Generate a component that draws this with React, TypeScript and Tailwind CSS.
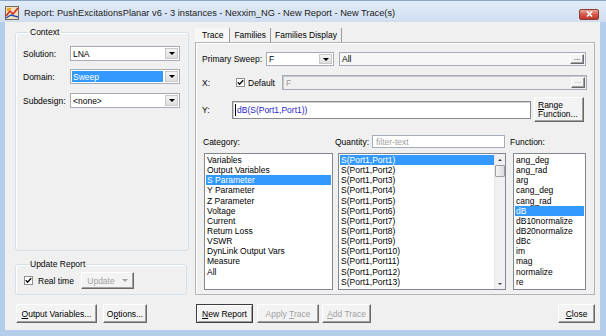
import React from "react";

const F = "font-['Liberation_Sans',Arial,sans-serif]";

function Arrow({ color = "border-t-black" }: { color?: string }) {
  return (
    <div
      className={`w-0 h-0 border-l-[3px] border-r-[3px] border-t-[3px] border-l-transparent border-r-transparent ${color}`}
    />
  );
}

function Combo({
  className,
  text,
  highlight,
}: {
  className: string;
  text: string;
  highlight?: boolean;
}) {
  return (
    <div className={`flex border border-[#a5acb5] bg-white ${className}`}>
      <div className="flex-1 flex items-center p-[1px] min-w-0">
        <div
          className={`h-full flex items-center pl-[1px] ${
            highlight ? "bg-[#3399ff] text-white w-full" : "text-black"
          }`}
        >
          {text}
        </div>
      </div>
      <div className="w-[13px] m-[1px] border border-[#c8c8c8] bg-gradient-to-b from-[#f4f4f4] to-[#dedede] flex items-center justify-center">
        <Arrow />
      </div>
    </div>
  );
}

function Check() {
  return (
    <div className="w-[9px] h-[9px] border border-[#8e8f8f] bg-white flex items-center justify-center">
      <svg width="7" height="7" viewBox="0 0 7 7">
        <path d="M0.8 3.3 L2.6 5.2 L6.2 1.2" stroke="#111" strokeWidth="1.5" fill="none" />
      </svg>
    </div>
  );
}

function Btn({
  className,
  children,
  disabled,
  def,
}: {
  className: string;
  children: React.ReactNode;
  disabled?: boolean;
  def?: boolean;
}) {
  return (
    <div
      className={`flex items-center justify-center border ${
        def
          ? "border-[#3c3c3c] shadow-[inset_1px_1px_0_#ffffff,inset_-1px_-1px_0_#a0a0a0]"
          : "border-t-white border-l-white border-r-[#696969] border-b-[#696969] shadow-[inset_-1px_-1px_0_#a0a0a0]"
      } bg-[#f3f3f3] ${disabled ? "text-[#a2a2a2]" : "text-black"} ${className}`}
    >
      {children}
    </div>
  );
}

const categories = [
  "Variables",
  "Output Variables",
  "S Parameter",
  "Y Parameter",
  "Z Parameter",
  "Voltage",
  "Current",
  "Return Loss",
  "VSWR",
  "DynLink Output Vars",
  "Measure",
  "All",
];

const quantities = Array.from({ length: 13 }, (_, i) => `S(Port1,Port${i + 1})`);

const functions = [
  "ang_deg",
  "ang_rad",
  "arg",
  "cang_deg",
  "cang_rad",
  "dB",
  "dB10normalize",
  "dB20normalize",
  "dBc",
  "im",
  "mag",
  "normalize",
  "re",
];

function Item({ text, sel, className = "" }: { text: string; sel?: boolean; className?: string }) {
  return (
    <div
      className={`h-[10.15px] leading-[10.15px] pl-[1px] whitespace-nowrap ${
        sel ? "bg-[#3399ff] text-white" : "text-black"
      } ${className}`}
    >
      {text}
    </div>
  );
}

export default function App() {
  return (
    <div
      className={`${F} w-[606px] h-[336px] bg-[#b3cdeb] flex flex-col text-[8.5px] leading-[10px] text-black overflow-hidden border-t border-[#8da6c4]`}
    >
      {/* title bar */}
      <div className="h-[21px] flex items-center bg-gradient-to-b from-[#e2ecf8] to-[#d0def0] pl-[5px] pr-[7px] relative">
        <svg width="14" height="14" viewBox="0 0 14 14" className="mt-[2px]">
          <rect x="0.5" y="0.5" width="13" height="13" fill="#f3e0c0" stroke="#7a6a5a" />
          <path d="M1 10 L5 5 L8 8 L13 2" stroke="#d03020" strokeWidth="1.6" fill="none" />
          <path d="M1 12 L6 9 L13 11" stroke="#2050c0" strokeWidth="1.4" fill="none" />
          <rect x="2" y="2" width="4" height="3" fill="#f0a020" />
        </svg>
        <div className="ml-[5px] mt-[3px] text-[9.25px] text-[#1b1b1b] whitespace-nowrap">
          Report: PushExcitationsPlanar v6 - 3 instances - Nexxim_NG - New Report - New Trace(s)
        </div>
        <div className="ml-auto mt-[5px] w-[20px] h-[11px] rounded-[2px] border border-[#8e3a32] bg-gradient-to-b from-[#e9a99a] via-[#d2574a] to-[#c0392b] flex items-center justify-center">
          <svg width="7" height="6" viewBox="0 0 7 6">
            <path d="M1 0.5 L6 5.5 M6 0.5 L1 5.5" stroke="white" strokeWidth="1.6" />
          </svg>
        </div>
      </div>

      {/* body */}
      <div className="flex-1 ml-[5px] mr-[6px] mb-[6px] bg-[#f0f0f0] flex flex-col">
        <div className="flex pt-[5px]">
          {/* left column */}
          <div className="ml-[10px] w-[174px] flex flex-col">
            <fieldset className="h-[224px] border border-[#d5dfe5] rounded-[3px] shadow-[inset_1px_1px_0_#ffffff] pl-[7px]">
              <legend className="ml-[5px] px-[2px] leading-[10px]">Context</legend>
              <div className="pt-[9px] flex flex-col">
                <div className="flex items-center h-[15px]">
                  <div className="w-[47px]">Solution:</div>
                  <Combo className="w-[110px] h-[15px]" text="LNA" />
                </div>
                <div className="flex items-center h-[15px] mt-[8px]">
                  <div className="w-[47px]">Domain:</div>
                  <Combo className="w-[110px] h-[15px]" text="Sweep" highlight />
                </div>
                <div className="flex items-center h-[15px] mt-[9px]">
                  <div className="w-[47px]">Subdesign:</div>
                  <Combo className="w-[110px] h-[15px]" text="<none>" />
                </div>
              </div>
            </fieldset>
            <fieldset className="mt-[8px] h-[36px] w-[172px] border border-[#d5dfe5] rounded-[3px] shadow-[inset_1px_1px_0_#ffffff] pl-[8px]">
              <legend className="ml-[5px] px-[1px] leading-[10px]">Update Report</legend>
              <div className="flex items-center h-[17px] mt-[3px]">
                <Check />
                <div className="ml-[5px] w-[43px]">Real time</div>
                <Btn className="w-[53px] h-[17px] gap-[7px]" disabled>
                  <span>Update</span>
                  <Arrow color="border-t-[#a2a2a2]" />
                </Btn>
              </div>
            </fieldset>
          </div>

          {/* right column */}
          <div className="ml-[6px] w-[400px] flex flex-col mt-[1px]">
            <div className="h-[14px] flex items-center">
              <div className="h-full flex items-center pl-[7px] pr-[6px] bg-[#f7f7f7] border-r border-[#9a9a9a]">Trace</div>
              <div className="h-full flex items-center px-[4px] border-r border-[#9a9a9a]">Families</div>
              <div className="h-full flex items-center px-[4px] border-r border-[#9a9a9a]">Families Display</div>
            </div>
            <div className="h-[253px] border border-[#b4b4b4] shadow-[inset_1px_1px_0_#ffffff] pl-[6px] pt-[9px] flex flex-col">
              {/* primary sweep */}
              <div className="flex items-center h-[14px]">
                <div className="w-[64px]">Primary Sweep:</div>
                <Combo className="w-[68px] h-[14px]" text="F" />
                <div className="ml-[5px] w-[247px] h-[14px] border border-[#a5acb5] bg-[#f7f7f7] flex items-center pl-[2px]">
                  <span>All</span>
                  <Btn className="ml-auto mr-[1px] w-[14px] h-[10px] text-[#2030a0] text-[8px] leading-[6px] items-start">...</Btn>
                </div>
              </div>
              {/* X */}
              <div className="flex items-center h-[15px] mt-[9px]">
                <div className="w-[34px]">X:</div>
                <Check />
                <div className="ml-[3px] w-[34px]">Default</div>
                <div className="w-[305px] h-[15px] border border-[#a5acb5] bg-[#f0f0f0] shadow-[inset_1px_1px_0_#c8c8c8] flex items-center pl-[3px] text-[#9a9a9a]">
                  <span>F</span>
                  <Btn className="ml-auto mr-[1px] w-[14px] h-[11px] text-[8px] leading-[6px] items-start" disabled>...</Btn>
                </div>
              </div>
              {/* Y */}
              <div className="flex items-center h-[25px] mt-[7px]">
                <div className="w-[30px]">Y:</div>
                <div className="w-[299px] h-[18px] border border-[#8a8a8a] shadow-[inset_1px_1px_0_#d0d0d0] bg-white flex items-center pl-[2px] text-[#2424c8]">
                  <span className="w-[1px] h-[12px] bg-black mr-[1px]" />
                  <span>dB(S(Port1,Port1))</span>
                </div>
                <Btn className="ml-[3px] w-[50px] h-[25px] flex-col !items-start pl-[3px] leading-[9px]">
                  <span>
                    <span className="underline">R</span>ange
                  </span>
                  <span>Function...</span>
                </Btn>
              </div>
              {/* labels */}
              <div className="flex items-center h-[13px] mt-[13px]">
                <div className="w-[134px] pl-[1px]">Category:</div>
                <div className="w-[37px] -ml-[1px]">Quantity:</div>
                <div className="w-[133px] h-[13px] border border-[#a5acb5] bg-white flex items-center pl-[3px] text-[#a0a0a0]">
                  filter-text
                </div>
                <div className="ml-[5px]">Function:</div>
              </div>
              {/* lists */}
              <div className="flex h-[137px] mt-[5px]">
                <div className="ml-[2px] w-[129px] h-full border border-[#828790] bg-white p-[1px] pt-[1px] overflow-hidden">
                  {categories.map((c) => (
                    <Item key={c} text={c} sel={c === "S Parameter"} />
                  ))}
                </div>
                <div className="ml-[5px] w-[168px] h-full border border-[#828790] bg-white flex overflow-hidden">
                  <div className="flex-1 p-[1px] pr-0">
                    {quantities.map((q, i) => (
                      <Item key={q} text={q} sel={i === 0} />
                    ))}
                  </div>
                  <div className="w-[11px] h-full bg-[#f0f0f0] border-l border-[#e6e6e6] flex flex-col items-center">
                    <div className="h-[11px] flex items-center justify-center">
                      <div className="w-0 h-0 border-l-[2px] border-r-[2px] border-b-[2px] border-l-transparent border-r-transparent border-b-[#404040]" />
                    </div>
                    <div className="w-[10px] h-[12px] border border-[#a0a0a0] rounded-[1px] bg-gradient-to-r from-[#f4f4f4] to-[#dcdcdc]" />
                    <div className="mt-auto h-[11px] flex items-center justify-center">
                      <div className="w-0 h-0 border-l-[2px] border-r-[2px] border-t-[2px] border-l-transparent border-r-transparent border-t-[#404040]" />
                    </div>
                  </div>
                </div>
                <div className="ml-[7px] w-[73px] h-full border border-[#828790] bg-white p-[1px] overflow-hidden">
                  {functions.map((f) => (
                    <Item key={f} text={f} sel={f === "dB"} />
                  ))}
                </div>
              </div>
            </div>
          </div>
        </div>

        {/* bottom buttons */}
        <div className="flex items-center mt-[9px] h-[19px]">
          <Btn className="ml-[11px] w-[81px] h-[19px]">
            <span>
              <span className="underline">O</span>utput Variables...
            </span>
          </Btn>
          <Btn className="ml-[6px] w-[44px] h-[19px]">
            <span>
              O<span className="underline">p</span>tions...
            </span>
          </Btn>
          <Btn className="ml-[49px] w-[57px] h-[19px]" def>
            <span>
              <span className="underline">N</span>ew Report
            </span>
          </Btn>
          <Btn className="ml-[4px] w-[62px] h-[19px]" disabled>
            <span>
              Apply <span className="underline">T</span>race
            </span>
          </Btn>
          <Btn className="ml-[3px] w-[49px] h-[19px]" disabled>
            <span>
              <span className="underline">A</span>dd Trace
            </span>
          </Btn>
          <Btn className="ml-auto mr-[5px] w-[37px] h-[19px]">
            <span>
              <span className="underline">C</span>lose
            </span>
          </Btn>
        </div>
      </div>
    </div>
  );
}
